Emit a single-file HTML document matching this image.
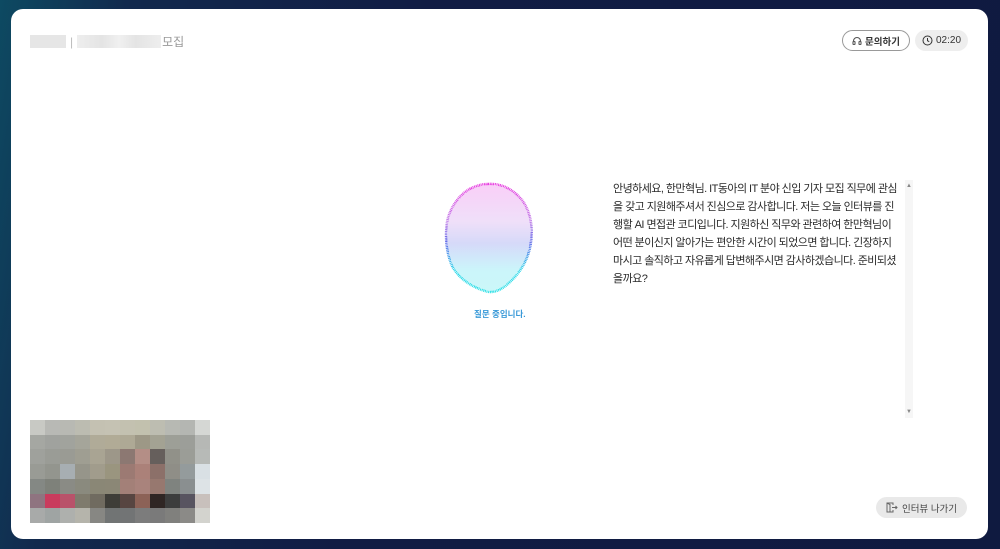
<!DOCTYPE html>
<html><head><meta charset="utf-8"><style>
*{margin:0;padding:0;box-sizing:border-box}
html,body{width:1000px;height:549px;overflow:hidden}
body{background:linear-gradient(100deg,#0d4a62 0%,#12294d 12%,#111c44 40%,#0f1a40 100%);font-family:"Liberation Sans","Noto Sans CJK KR",sans-serif;position:relative}
.card{position:absolute;left:11px;top:9px;width:977px;height:530px;background:#fff;border-radius:12px}
.title{position:absolute;left:30px;top:33px;font-size:12px;color:#999;display:flex;align-items:center}
.blk{display:inline-block;height:13px;background:#e6e6e6}
.btn1{position:absolute;left:842px;top:30px;width:68px;height:21px;border:1px solid #999;border-radius:11px;font-size:9.5px;color:#333;display:flex;align-items:center;justify-content:center;gap:3px;font-weight:bold}
.btn2{position:absolute;left:915px;top:30px;width:53px;height:21px;background:#eee;border-radius:11px;font-size:10px;color:#333;display:flex;align-items:center;justify-content:center;gap:3px}
.txt{position:absolute;left:613px;top:180px;font-size:11px;line-height:18px;color:#2a2a2a;white-space:nowrap}
.txt div{letter-spacing:-0.55px}
.sb{position:absolute;left:905px;top:180px;width:8px;height:238px;background:#f6f6f6}
.cap{position:absolute;left:474px;top:308px;font-size:8.5px;color:#3a9ad8;font-weight:bold}
.cam{position:absolute;left:30px;top:420px;width:180px;height:103px;display:grid;grid-template-columns:repeat(12,15px);grid-template-rows:repeat(7,1fr)}
.exit{position:absolute;left:876px;top:497px;width:91px;height:21px;background:#e9e9e9;border-radius:11px;font-size:9.5px;color:#444;display:flex;align-items:center;justify-content:center;gap:4px}
</style></head><body>
<div class="card"></div>
<div class="title"><span class="blk" style="width:36px"></span><span style="margin:0 4px;color:#bbb">|</span><span class="blk" style="width:84px;background:linear-gradient(90deg,#eee,#e4e4e4 30%,#f0f0f0 50%,#e4e4e4 70%,#eee)"></span><span style="margin-left:1px">모집</span></div>
<div class="btn1"><svg width="10" height="10" viewBox="0 0 10 10" fill="none" stroke="#555" stroke-width="1.1"><path d="M1.5 6V5a3.5 3.5 0 0 1 7 0v1"/><rect x="1" y="5.5" width="2" height="3" rx=".5"/><rect x="7" y="5.5" width="2" height="3" rx=".5"/></svg>문의하기</div>
<div class="btn2"><svg width="11" height="11" viewBox="0 0 11 11" fill="none" stroke="#333" stroke-width="1"><circle cx="5.5" cy="5.5" r="4.5"/><path d="M5.5 3v2.7l1.7 1"/></svg>02:20</div>
<svg style="position:absolute;left:440px;top:180px" width="100" height="120" viewBox="0 0 100 120">
<defs>
<linearGradient id="g" x1="0" y1="0" x2="0" y2="1"><stop offset="0" stop-color="#e83ee0"/><stop offset=".35" stop-color="#c080e8"/><stop offset=".55" stop-color="#5a68e8"/><stop offset=".8" stop-color="#30d8ea"/><stop offset="1" stop-color="#30e0e6"/></linearGradient>
<pattern id="p" width="2" height="2" patternUnits="userSpaceOnUse"><rect x=".5" y=".5" width="1" height="1" fill="#fff"/></pattern>
<mask id="m"><rect width="100" height="120" fill="url(#p)"/></mask>
</defs>
<path d="M48 4C62 3 74 10 82 20C91 32 93 48 91 62C89 78 81 92 70 102C62 110 53 114 45 111C32 107 19 99 12 86C6 72 5 56 7 42C10 26 22 11 34 7C39 5 43 4 48 4Z" fill="url(#g)" mask="url(#m)"/>
<path d="M48 4C62 3 74 10 82 20C91 32 93 48 91 62C89 78 81 92 70 102C62 110 53 114 45 111C32 107 19 99 12 86C6 72 5 56 7 42C10 26 22 11 34 7C39 5 43 4 48 4Z" fill="none" stroke="url(#g)" stroke-width="2.5" stroke-dasharray="1 .7"/>
</svg>
<div class="cap">질문 중입니다.</div>
<div class="txt"><div>안녕하세요, 한만혁님. IT동아의 IT 분야 신입 기자 모집 직무에 관심</div><div>을 갖고 지원해주셔서 진심으로 감사합니다. 저는 오늘 인터뷰를 진</div><div>행할 AI 면접관 코디입니다. 지원하신 직무와 관련하여 한만혁님이</div><div>어떤 분이신지 알아가는 편안한 시간이 되었으면 합니다. 긴장하지</div><div>마시고 솔직하고 자유롭게 답변해주시면 감사하겠습니다. 준비되셨</div><div>을까요?</div></div>
<div class="sb"></div>
<div style="position:absolute;left:906px;top:183px;font-size:6px;color:#888">▲</div>
<div style="position:absolute;left:906px;top:409px;font-size:6px;color:#888">▼</div>
<div class="cam">
<i style="background:#c8c9c4"></i><i style="background:#b8b9b5"></i><i style="background:#b8b9b3"></i><i style="background:#bcbcb1"></i><i style="background:#c4c1b2"></i><i style="background:#c5c2b3"></i><i style="background:#c3c1b0"></i><i style="background:#c2c1ae"></i><i style="background:#bdbdb1"></i><i style="background:#b7b9b3"></i><i style="background:#b4b6b2"></i><i style="background:#d5d7d4"></i>
<i style="background:#a5a7a2"></i><i style="background:#a0a29e"></i><i style="background:#a1a39d"></i><i style="background:#a5a59a"></i><i style="background:#b0ab98"></i><i style="background:#b1ab96"></i><i style="background:#aea995"></i><i style="background:#9d9886"></i><i style="background:#a3a293"></i><i style="background:#9d9f97"></i><i style="background:#9c9e99"></i><i style="background:#b6b8b5"></i>
<i style="background:#9fa19c"></i><i style="background:#9a9c96"></i><i style="background:#9a9b94"></i><i style="background:#9f9e92"></i><i style="background:#a9a493"></i><i style="background:#9d9789"></i><i style="background:#8c7872"></i><i style="background:#b48e86"></i><i style="background:#665f5c"></i><i style="background:#919189"></i><i style="background:#9b9d97"></i><i style="background:#b7bab7"></i>
<i style="background:#999b95"></i><i style="background:#93958e"></i><i style="background:#a7aeb2"></i><i style="background:#96958a"></i><i style="background:#a19c8c"></i><i style="background:#9a957f"></i><i style="background:#9c7a73"></i><i style="background:#ab8179"></i><i style="background:#8c7069"></i><i style="background:#8f8e87"></i><i style="background:#949b9c"></i><i style="background:#d9e0e4"></i>
<i style="background:#848884"></i><i style="background:#7e817a"></i><i style="background:#8a8b85"></i><i style="background:#8a8a7e"></i><i style="background:#8a8776"></i><i style="background:#8b8776"></i><i style="background:#a38078"></i><i style="background:#a9837c"></i><i style="background:#97786f"></i><i style="background:#7f837f"></i><i style="background:#8a8f90"></i><i style="background:#dde3e6"></i>
<i style="background:#8f7480"></i><i style="background:#c93b5d"></i><i style="background:#b9526a"></i><i style="background:#7f7b6d"></i><i style="background:#706b60"></i><i style="background:#3e3d38"></i><i style="background:#574541"></i><i style="background:#8c6257"></i><i style="background:#2f2624"></i><i style="background:#3c3d3d"></i><i style="background:#585460"></i><i style="background:#c8c0bc"></i>
<i style="background:#a8aaa9"></i><i style="background:#9fa4a3"></i><i style="background:#aeb0ad"></i><i style="background:#b5b4ab"></i><i style="background:#878783"></i><i style="background:#717474"></i><i style="background:#727475"></i><i style="background:#7c7c7c"></i><i style="background:#7a7a7a"></i><i style="background:#80807d"></i><i style="background:#8b8a87"></i><i style="background:#d3d3ce"></i>
</div>
<div class="exit"><svg width="12" height="11" viewBox="0 0 12 11" fill="none" stroke="#666" stroke-width="1"><path d="M7 3V1H1v9h6V8"/><path d="M1 1l3 1.5v8"/><path d="M6 5.5h5M9.5 4l1.5 1.5L9.5 7"/></svg>인터뷰 나가기</div>
</body></html>
